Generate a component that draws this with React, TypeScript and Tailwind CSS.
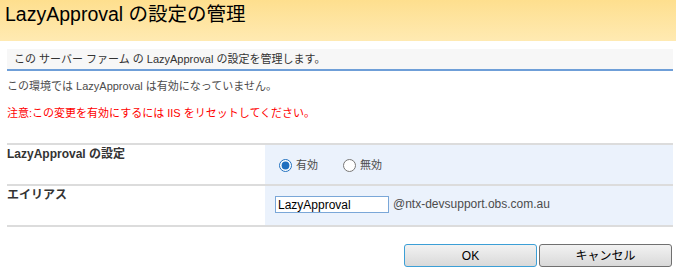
import { useState } from "react";

const font = { fontFamily: '"Liberation Sans", "Noto Sans CJK JP", sans-serif' };

export default function App() {
  const [enabled, setEnabled] = useState(true);
  const [alias, setAlias] = useState("LazyApproval");

  return (
    <div className="w-[676px] h-[277px] bg-white text-[11px] text-[#4c4c4c] overflow-hidden" style={font}>
      <div className="h-[41px] bg-gradient-to-b from-[#fedf8e] to-[#ffeab2] pl-[5px] pt-[1px]">
        <h1 className="text-[19.5px] leading-[26px] text-black">LazyApproval の設定の管理</h1>
      </div>

      <div className="ml-[7px] mt-[8px] mr-[3px] h-[22px] bg-[#f7f7f7] border-b-2 border-[#6f9fd8] pl-[7px] leading-[20px] text-[#333]">
        この サーバー ファーム の LazyApproval の設定を管理します。
      </div>

      <div className="pl-[7px] pr-[3px]">
        <p className="mt-[7px] leading-[16px]">この環境では LazyApproval は有効になっていません。</p>
        <p className="mt-[11px] leading-[16px] text-[#ff0000]">注意:この変更を有効にするには IIS をリセットしてください。</p>

        <div className="mt-[22px] border-t-2 border-b-2 border-[#dcdcdc]">
          <div className="flex h-[41px] border-b-2 border-[#dcdcdc]">
            <div className="w-[258px] pt-[1px] text-[12px] font-bold text-[#333] leading-[16px]">LazyApproval の設定</div>
            <div className="flex-1 bg-[#ebf2fc] flex items-center gap-[25px] pl-[14px] pt-[2px]">
              <label className="flex items-center gap-[4px]">
                <input type="radio" name="s" checked={enabled} onChange={() => setEnabled(true)} className="w-[13px] h-[13px] m-0 accent-[#1f6fbf]" />
                有効
              </label>
              <label className="flex items-center gap-[4px]">
                <input type="radio" name="s" checked={!enabled} onChange={() => setEnabled(false)} className="w-[13px] h-[13px] m-0" />
                無効
              </label>
            </div>
          </div>
          <div className="flex h-[39px]">
            <div className="w-[258px] pt-[1px] text-[12px] font-bold text-[#333] leading-[16px]">エイリアス</div>
            <div className="flex-1 bg-[#ebf2fc] flex items-start pl-[10px] pt-[10px]">
              <input
                value={alias}
                onChange={(e) => setAlias(e.target.value)}
                className="w-[114px] h-[17px] border border-[#7aa7d8] bg-white px-[2px] text-[12px] text-black outline-none"
                style={font}
              />
              <span className="ml-[4px] leading-[17px] text-[12px]">@ntx-devsupport.obs.com.au</span>
            </div>
          </div>
        </div>

        <div className="flex justify-end gap-[2px] mt-[17px] pr-[1px]">
          <button className="w-[133px] h-[23px] rounded-[3px] border border-[#3c9fd6] bg-gradient-to-b from-[#f2f2f2] to-[#d9d9d9] text-black text-[12px]">OK</button>
          <button className="w-[133px] h-[23px] rounded-[3px] border border-[#707070] bg-gradient-to-b from-[#f2f2f2] to-[#d9d9d9] text-black text-[12px]">キャンセル</button>
        </div>
      </div>
    </div>
  );
}
